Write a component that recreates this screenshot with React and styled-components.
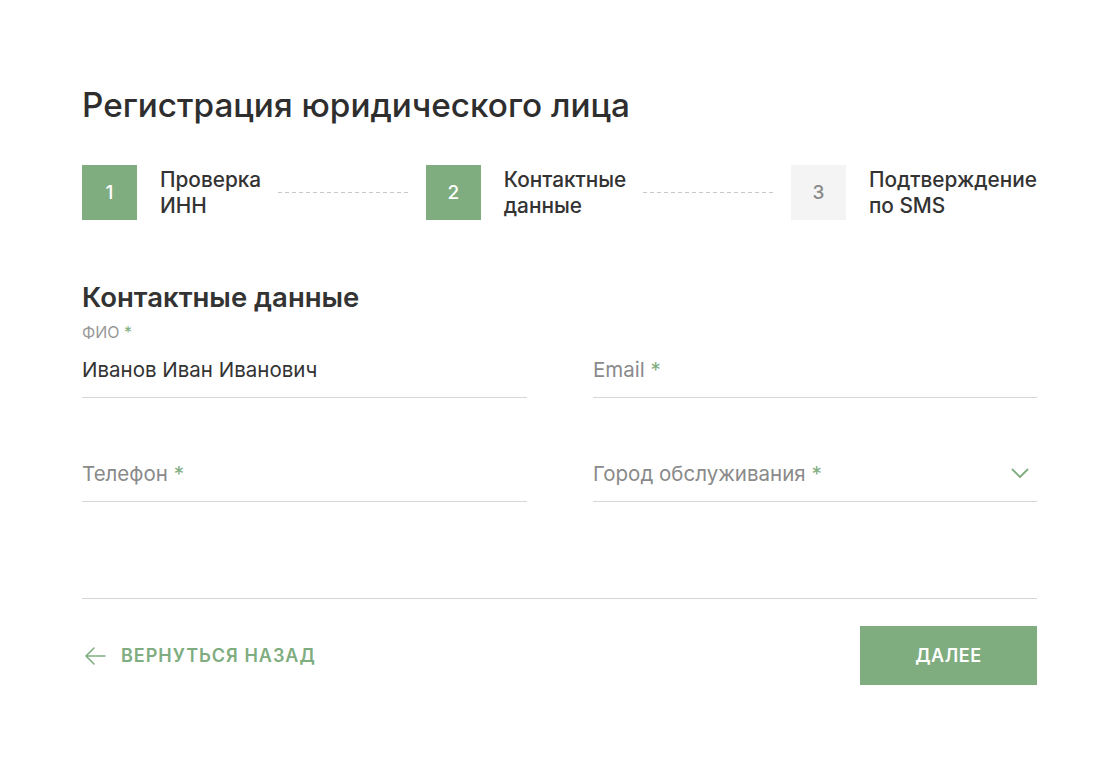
import React from 'react'
import styled, { createGlobalStyle } from 'styled-components'

const GREEN = '#7fad7f'

const GlobalStyle = createGlobalStyle`
    body {
        margin: 0;
        background: #fff;
        font-family: Inter, 'Noto Sans', sans-serif;
        color: #333;
    }
`

const Page = styled.div`
    width: 955px;
    padding: 85px 0 0 82px;
`

const Title = styled.h1`
    margin: 0;
    font-size: 33.3px;
    line-height: 40px;
    font-weight: 500;
    color: #2e2e2e;
`

const Steps = styled.div`
    display: flex;
    align-items: center;
    margin-top: 40px;
`

const StepBox = styled.div`
    width: 55px;
    height: 55px;
    flex: none;
    display: flex;
    align-items: center;
    justify-content: center;
    font-size: 19px;
    font-weight: 500;
    background: ${p => (p.$done ? GREEN : '#f4f4f4')};
    color: ${p => (p.$done ? '#fff' : '#888')};
`

const StepLabel = styled.div`
    margin-left: 23px;
    font-size: 20.8px;
    line-height: 26px;
    font-weight: 500;
    color: #333;
    white-space: pre-line;
`

const Dashes = styled.div`
    flex: 1;
    height: 1px;
    margin: 0 17px;
    background-image: repeating-linear-gradient(90deg, #c8c8c8 0 4px, transparent 4px 7px);
`

const SectionTitle = styled.h2`
    margin: 61px 0 0;
    font-size: 27.5px;
    line-height: 32px;
    font-weight: 600;
    color: #333;
`

const Grid = styled.div`
    display: grid;
    grid-template-columns: 445px 444px;
    column-gap: 66px;
    row-gap: 28px;
    margin-top: 9px;
`

const Field = styled.div`
    display: flex;
    flex-direction: column;
`

const SmallLabel = styled.div`
    height: 20px;
    font-size: 16px;
    line-height: 20px;
    color: #999;
`

const InputRow = styled.div`
    height: 55px;
    display: flex;
    align-items: center;
    justify-content: space-between;
    border-bottom: 1px solid #d6d6d6;
    font-size: 20.5px;
`

const Value = styled.span`
    color: ${p => (p.$placeholder ? '#8a8a8a' : '#333')};
`

const Star = styled.span`
    color: ${GREEN};
`

const Separator = styled.div`
    height: 1px;
    background: #d6d6d6;
    margin-top: 96px;
`

const Footer = styled.div`
    display: flex;
    align-items: center;
    justify-content: space-between;
    margin-top: 27px;
`

const BackLink = styled.a`
    display: flex;
    align-items: center;
    gap: 15px;
    padding-left: 2px;
    font-size: 18px;
    font-weight: 600;
    color: ${GREEN};
    text-transform: uppercase;
    letter-spacing: 1px;
    cursor: pointer;
`

const NextButton = styled.button`
    width: 177px;
    height: 59px;
    border: none;
    background: ${GREEN};
    color: #fff;
    font-family: inherit;
    font-size: 18px;
    font-weight: 600;
    letter-spacing: 0.6px;
    cursor: pointer;
`

const Chevron = styled.svg`
    margin-right: 8px;
`

const steps = [
    { n: 1, label: 'Проверка\nИНН', done: true },
    { n: 2, label: 'Контактные\nданные', done: true },
    { n: 3, label: 'Подтверждение\nпо SMS', done: false },
]

const ArrowLeft = () => (
    <svg width="22" height="20" viewBox="0 0 22 20" fill="none">
        <path d="M21 10H2M10 2l-8 8 8 8" stroke={GREEN} strokeWidth="1.6" strokeLinecap="round" strokeLinejoin="round" />
    </svg>
)

const App = () => {
    return (
        <>
            <GlobalStyle />
            <Page>
                <Title>Регистрация юридического лица</Title>
                <Steps>
                    {steps.map((s, i) => (
                        <React.Fragment key={s.n}>
                            <StepBox $done={s.done}>{s.n}</StepBox>
                            <StepLabel>{s.label}</StepLabel>
                            {i < steps.length - 1 && <Dashes />}
                        </React.Fragment>
                    ))}
                </Steps>

                <SectionTitle>Контактные данные</SectionTitle>
                <Grid>
                    <Field>
                        <SmallLabel>ФИО <Star>*</Star></SmallLabel>
                        <InputRow><Value>Иванов Иван Иванович</Value></InputRow>
                    </Field>
                    <Field>
                        <SmallLabel />
                        <InputRow><Value $placeholder>Email <Star>*</Star></Value></InputRow>
                    </Field>
                    <Field>
                        <SmallLabel />
                        <InputRow><Value $placeholder>Телефон <Star>*</Star></Value></InputRow>
                    </Field>
                    <Field>
                        <SmallLabel />
                        <InputRow>
                            <Value $placeholder>Город обслуживания <Star>*</Star></Value>
                            <Chevron width="18" height="11" viewBox="0 0 18 11" fill="none">
                                <path d="M1.5 1.5l7.5 7.5 7.5-7.5" stroke={GREEN} strokeWidth="1.8" strokeLinecap="round" strokeLinejoin="round" />
                            </Chevron>
                        </InputRow>
                    </Field>
                </Grid>

                <Separator />
                <Footer>
                    <BackLink><ArrowLeft />Вернуться назад</BackLink>
                    <NextButton>ДАЛЕЕ</NextButton>
                </Footer>
            </Page>
        </>
    )
}

export default App
